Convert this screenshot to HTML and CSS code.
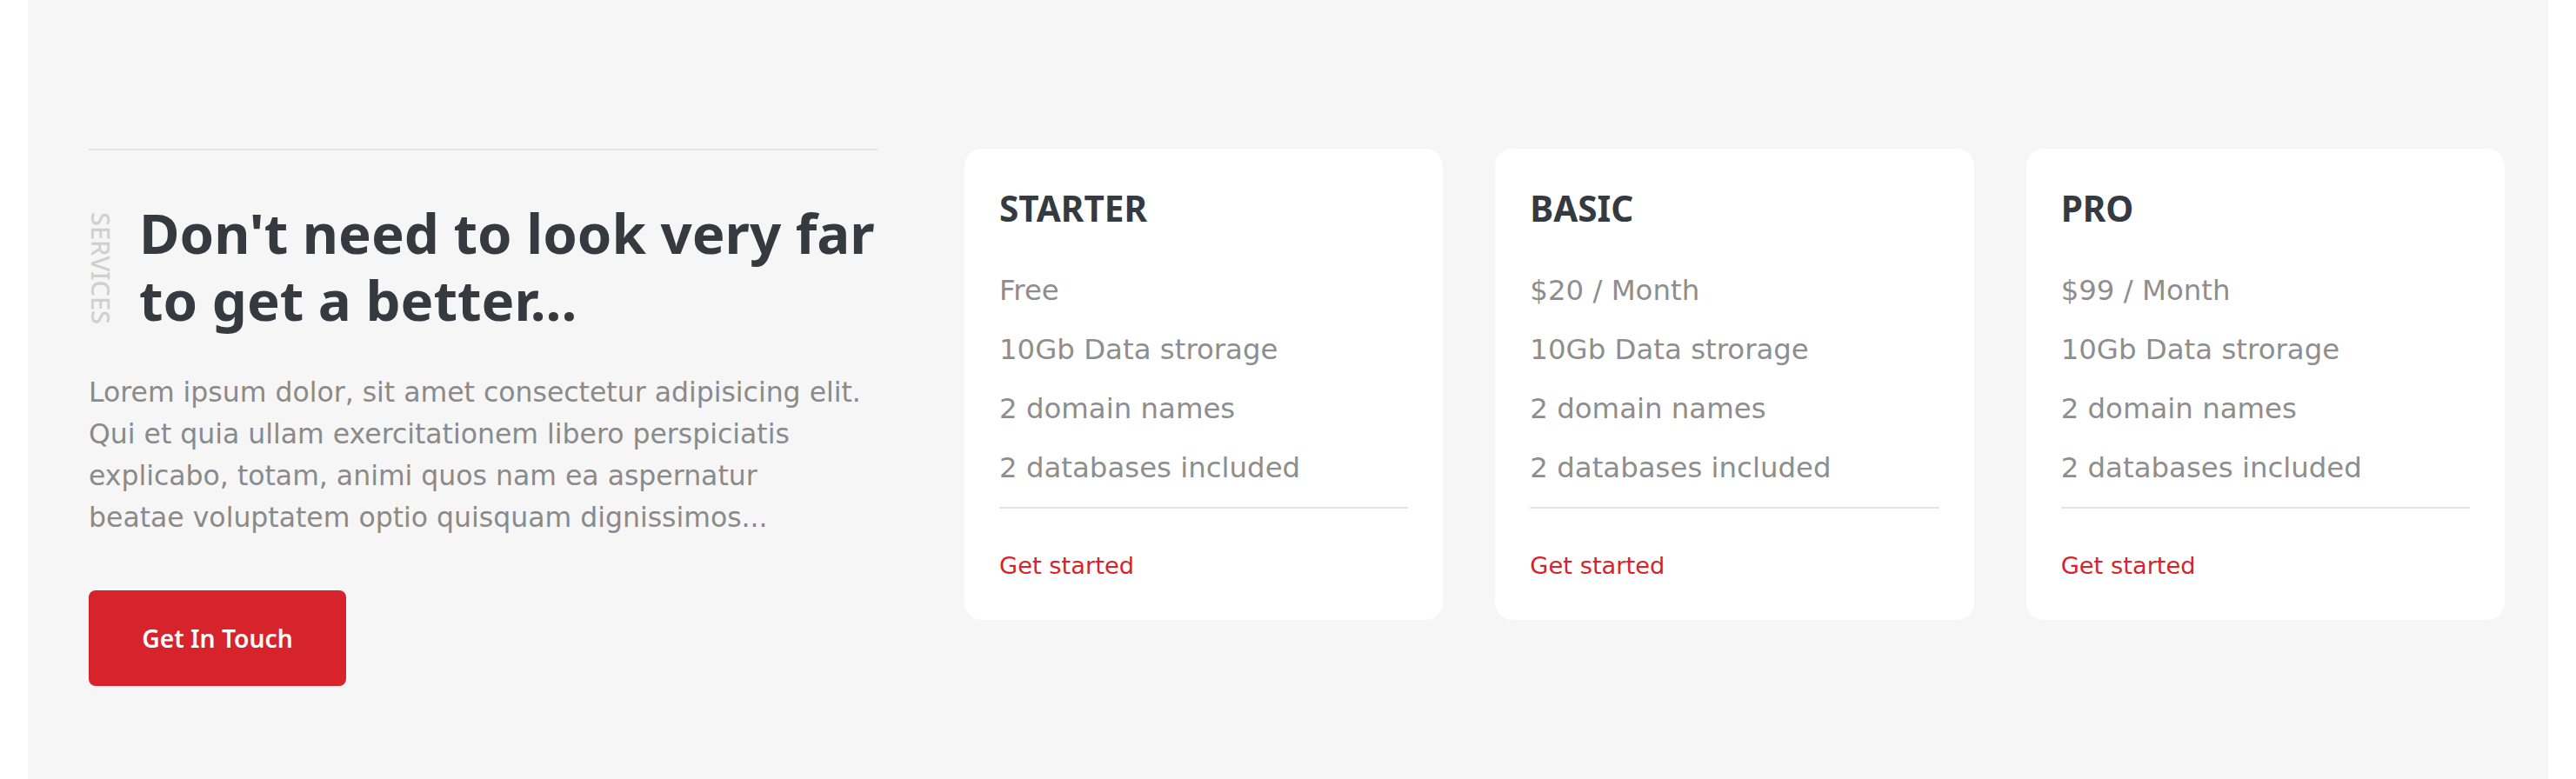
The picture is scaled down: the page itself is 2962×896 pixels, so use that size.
FILE: index.html
```html
<!DOCTYPE html>
<html lang="en">
<head>
<meta charset="utf-8">
<title>Services</title>
<link rel="stylesheet" href="styles.css">
</head>
<body>
<section class="services">
  <div class="intro">
    <div class="title-row">
      <span class="eyebrow">SERVICES</span>
      <h2 class="headline">Don't need to look very far to get a better...</h2>
    </div>
    <p class="lead">Lorem ipsum dolor, sit amet consectetur adipisicing elit.<br>Qui et quia ullam exercitationem libero perspiciatis<br>explicabo, totam, animi quos nam ea aspernatur<br>beatae voluptatem optio quisquam dignissimos...</p>
    <a class="btn" href="#">Get In Touch</a>
  </div>
  <div class="plans">
    <article class="plan">
      <h3 class="plan-name">STARTER</h3>
      <ul class="plan-features">
        <li>Free</li>
        <li>10Gb Data strorage</li>
        <li>2 domain names</li>
        <li>2 databases included</li>
      </ul>
      <a class="plan-link" href="#">Get started</a>
    </article>
    <article class="plan">
      <h3 class="plan-name">BASIC</h3>
      <ul class="plan-features">
        <li>$20 / Month</li>
        <li>10Gb Data strorage</li>
        <li>2 domain names</li>
        <li>2 databases included</li>
      </ul>
      <a class="plan-link" href="#">Get started</a>
    </article>
    <article class="plan">
      <h3 class="plan-name">PRO</h3>
      <ul class="plan-features">
        <li>$99 / Month</li>
        <li>10Gb Data strorage</li>
        <li>2 domain names</li>
        <li>2 databases included</li>
      </ul>
      <a class="plan-link" href="#">Get started</a>
    </article>
  </div>
</section>
</body>
</html>
```

FILE: styles.css
```css
* { box-sizing: border-box; }

html, body {
  margin: 0;
  padding: 0;
  background: #ffffff;
}

body {
  font-family: "DejaVu Sans", "Noto Sans", sans-serif;
}

.services {
  margin: 0 32px;
  min-height: 896px;
  background: #f6f6f6;
  padding: 171px 50px 0 70px;
  display: grid;
  grid-template-columns: 907px 1fr;
  column-gap: 100px;
  align-items: start;
}

/* Left intro column */
.intro {
  border-top: 2px solid #e5e5e5;
}

.title-row {
  display: flex;
  align-items: flex-start;
  gap: 29px;
  margin-top: 57px;
}

.eyebrow {
  writing-mode: vertical-rl;
  font-family: "Noto Sans", sans-serif;
  font-size: 29px;
  line-height: 29px;
  font-weight: 500;
  color: #d0d0d0;
  margin-top: 14px;
  flex: none;
}

.headline {
  margin: 0;
  font-family: "Noto Sans", sans-serif;
  font-weight: 700;
  font-size: 63.5px;
  line-height: 76.8px;
  color: #343a40;
}

.lead {
  margin: 43px 0 0;
  font-size: 31.5px;
  line-height: 48px;
  color: #8a8a8a;
}

.btn {
  display: inline-flex;
  align-items: center;
  justify-content: center;
  margin-top: 60px;
  width: 296px;
  height: 110px;
  border-radius: 8px;
  background: #d7232b;
  color: #ffffff;
  font-family: "Noto Sans", sans-serif;
  font-weight: 600;
  font-size: 28.3px;
  text-decoration: none;
}

/* Pricing cards */
.plans {
  display: grid;
  grid-template-columns: repeat(3, 1fr);
  column-gap: 60px;
  align-items: start;
}

.plan {
  background: #ffffff;
  border-radius: 20px;
  padding: 45px 40px 42px;
}

.plan-name {
  margin: 0;
  font-family: "Noto Sans", sans-serif;
  font-weight: 700;
  font-size: 40.5px;
  line-height: 48px;
  color: #343a40;
}

.plan-features {
  list-style: none;
  margin: 36px 0 0;
  padding: 0 0 11px;
  border-bottom: 2px solid #e6e6e6;
}

.plan-features li {
  font-size: 32.4px;
  line-height: 68px;
  color: #8e8e8e;
}

.plan-link {
  display: block;
  margin-top: 46px;
  font-size: 27.3px;
  line-height: 40px;
  color: #d9222a;
  text-decoration: none;
}
```
